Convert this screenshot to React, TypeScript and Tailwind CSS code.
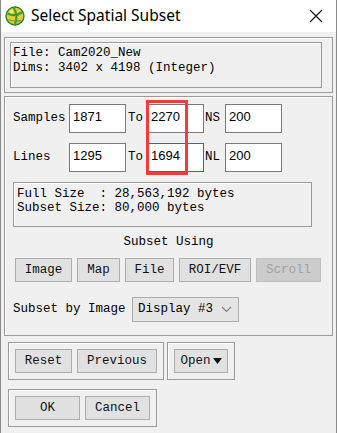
import React from "react";

const mono = { fontFamily: '"Liberation Mono", "DejaVu Sans Mono", monospace' };
const sans = { fontFamily: '"Liberation Sans", Arial, sans-serif' };

function Btn({ label, w, disabled }: { label: React.ReactNode; w: string; disabled?: boolean }) {
  return (
    <div
      className={`${w} h-[24px] flex items-center justify-center border text-[12.5px] ${
        disabled
          ? "bg-[#cccccc] border-[#bfbfbf] text-[#a0a0a0]"
          : "bg-[#e1e1e1] border-[#adadad] text-[#111]"
      }`}
    >
      {label}
    </div>
  );
}

function Field({ value, focus }: { value: string; focus?: boolean }) {
  return (
    <div
      className={`w-[57px] h-[29px] bg-white border pl-[3px] pt-[4px] text-[13px] leading-[15px] text-black ${
        focus ? "border-[#0078d7]" : "border-[#7a7a7a]"
      }`}
      style={sans}
    >
      {value}
    </div>
  );
}

function Globe() {
  return (
    <svg width="20" height="20" viewBox="0 0 20 20">
      <circle cx="10" cy="10" r="9" fill="#e3cf34" stroke="#2f7d34" strokeWidth="1.4" />
      <path d="M2.5 7.5 Q10 11.5 17.5 6" fill="none" stroke="#3c9a3c" strokeWidth="2.2" />
      <path d="M8.5 1.5 Q13.5 9 10 18.5" fill="none" stroke="#3c9a3c" strokeWidth="2.2" />
      <path d="M3.5 13.5 Q9 16 16 14.5" fill="none" stroke="#56a83c" strokeWidth="1.3" />
      <circle cx="6.5" cy="5.5" r="2" fill="#fff6a0" opacity="0.6" />
    </svg>
  );
}

export default function App() {
  return (
    <div
      className="relative w-[337px] h-[433px] bg-[#f0f0f0] border-l border-r border-[#8a8a8a] overflow-hidden text-black"
      style={mono}
    >
      {/* Title bar */}
      <div className="h-[32px] bg-white flex items-center pl-[4px]">
        <Globe />
        <span
          className="ml-[6px] text-[15.5px] text-black"
          style={{ fontFamily: '"Noto Sans", "Open Sans", sans-serif' }}
        >
          Select Spatial Subset
        </span>
        <svg className="ml-auto mr-[13px]" width="14" height="14" viewBox="0 0 14 14">
          <path d="M1 1 L13 13 M13 1 L1 13" stroke="#111" strokeWidth="1.1" />
        </svg>
      </div>

      {/* File info */}
      <div className="mt-[5px] ml-[3px] w-[329px] h-[56px] border border-[#9a9a9a] shadow-[inset_1px_1px_0_#fff] pl-[5px] pt-[4px]">
        <div className="w-[312px] h-[46px] border border-[#9a9a9a] shadow-[inset_1px_1px_0_#fff] pl-[2px] pt-[3px] text-[12.5px] leading-[15px]">
          <div>File: Cam2020_New</div>
          <div>Dims: 3402 x 4198 (Integer)</div>
        </div>
      </div>

      {/* Subset panel */}
      <div className="mt-[3px] ml-[3px] w-[329px] h-[240px] border border-[#9a9a9a] shadow-[inset_1px_1px_0_#fff] pl-[8px] pt-[7px] text-[12.5px]">
        <div className="flex items-center">
          <span className="w-[56px]">Samples</span>
          <Field value="1871" />
          <span className="w-[21px] pl-[2px]">To</span>
          <Field value="2270" />
          <span className="w-[21px] pl-[1px]">NS</span>
          <Field value="200" />
        </div>
        <div className="flex items-center mt-[10px]">
          <span className="w-[56px]">Lines</span>
          <Field value="1295" />
          <span className="w-[21px] pl-[2px]">To</span>
          <Field value="1694" focus />
          <span className="w-[21px] pl-[1px]">NL</span>
          <Field value="200" />
        </div>
        <div className="mt-[10px] w-[299px] h-[45px] border border-[#9a9a9a] shadow-[inset_1px_1px_0_#fff] pl-[3px] pt-[4px] leading-[14px]">
          <div className="whitespace-pre">Full Size  : 28,563,192 bytes</div>
          <div>Subset Size: 80,000 bytes</div>
        </div>
        <div className="w-[311px] text-center mt-[8px] leading-[15px]">Subset Using</div>
        <div className="flex gap-[5px] mt-[8px] ml-[2px]">
          <Btn label="Image" w="w-[57px]" />
          <Btn label="Map" w="w-[43px]" />
          <Btn label="File" w="w-[49px]" />
          <Btn label="ROI/EVF" w="w-[72px]" />
          <Btn label="Scroll" w="w-[65px]" disabled />
        </div>
        <div className="flex items-center mt-[15px]">
          <span className="w-[119px]">Subset by Image</span>
          <div className="w-[107px] h-[25px] bg-[#e5e5e5] border border-[#acacac] flex items-center pl-[5px]">
            <span>Display #3</span>
            <svg className="ml-auto mr-[6px]" width="11" height="7" viewBox="0 0 11 7">
              <path d="M1 1 L5.5 5.5 L10 1" fill="none" stroke="#808080" strokeWidth="1.1" />
            </svg>
          </div>
        </div>
      </div>

      {/* Reset / Previous / Open */}
      <div className="flex mt-[6px] ml-[7px] gap-[3px] text-[12.5px]">
        <div className="w-[156px] h-[38px] border border-[#9a9a9a] shadow-[inset_1px_1px_0_#fff] flex items-center gap-[5px] pl-[6px]">
          <Btn label="Reset" w="w-[57px]" />
          <Btn label="Previous" w="w-[80px]" />
        </div>
        <div className="w-[68px] h-[38px] border border-[#9a9a9a] shadow-[inset_1px_1px_0_#fff] flex items-center pl-[6px]">
          <Btn
            label={
              <span className="flex items-center">
                Open
                <svg className="ml-[2px]" width="9" height="6" viewBox="0 0 9 6">
                  <path d="M0 0 H9 L4.5 6 Z" fill="#111" />
                </svg>
              </span>
            }
            w="w-[54px]"
          />
        </div>
      </div>

      {/* OK / Cancel */}
      <div className="mt-[9px] ml-[7px] w-[149px] h-[38px] border border-[#9a9a9a] shadow-[inset_1px_1px_0_#fff] flex items-center gap-[5px] pl-[6px] text-[12.5px]">
        <Btn label="OK" w="w-[65px]" />
        <Btn label="Cancel" w="w-[65px]" />
      </div>

      {/* red annotation */}
      <div className="absolute left-[145px] top-[100px] w-[42px] h-[75px] border-[3px] border-[#f23b3b]" />
    </div>
  );
}
